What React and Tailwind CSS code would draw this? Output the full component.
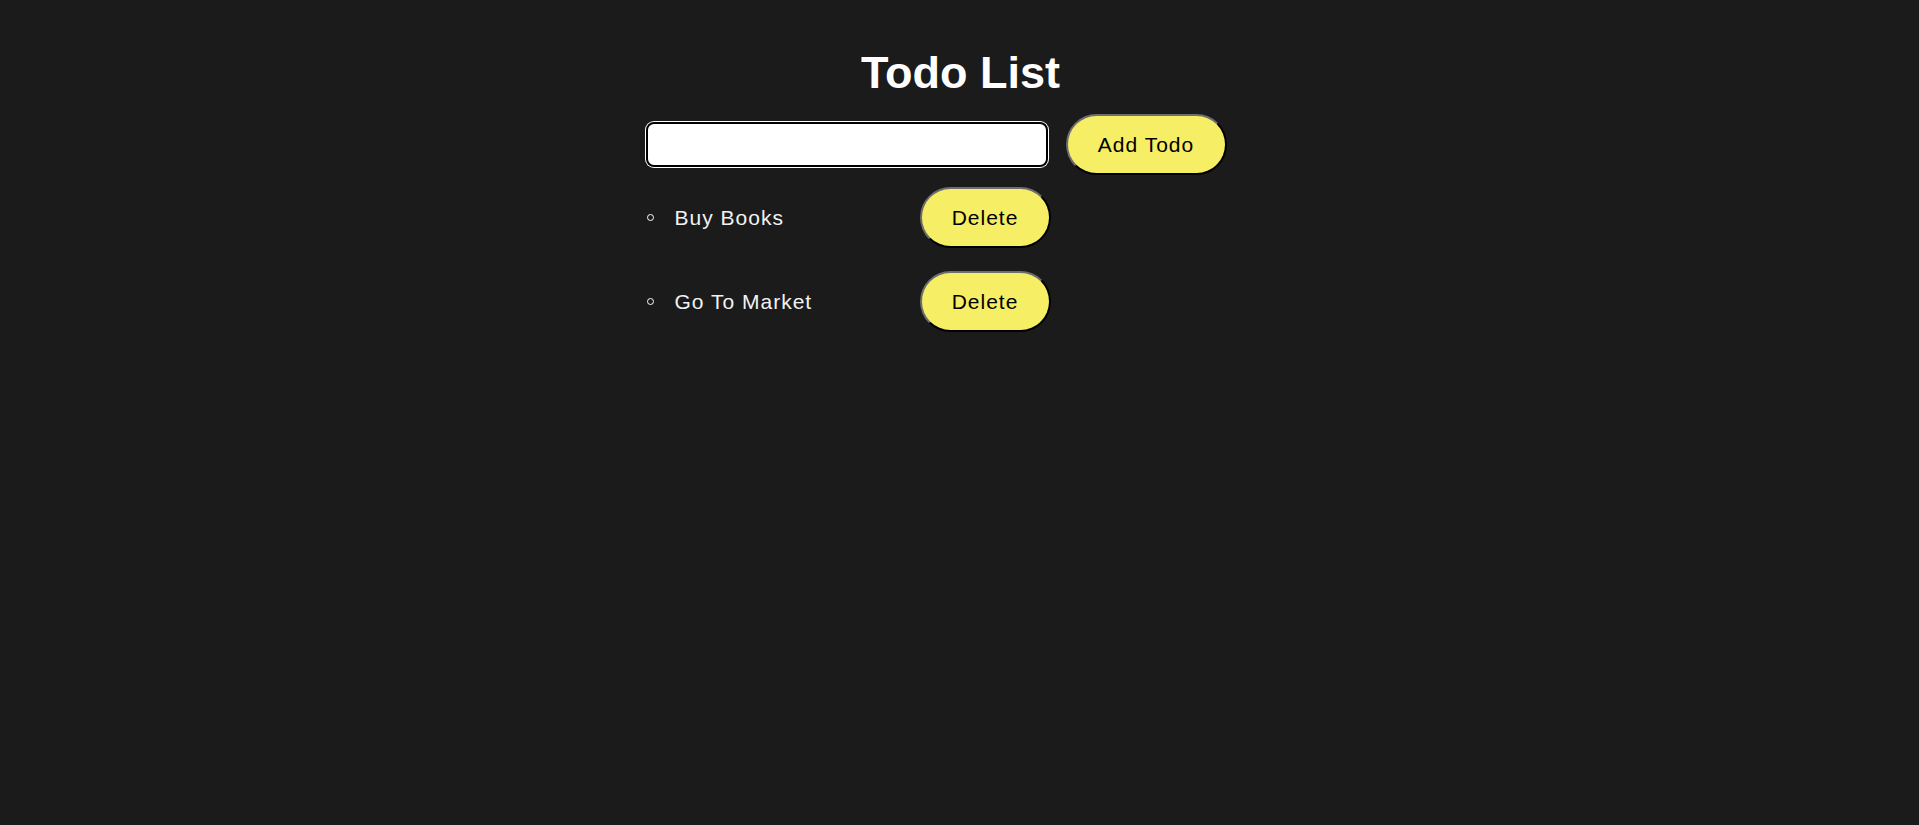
import { useState } from "react";

const initialTodos = ["Buy Books", "Go To Market"];

const pillBtn =
  "h-[61px] rounded-full border-2 border-t-[#6e6e6e] border-l-[#6e6e6e] border-r-black border-b-black bg-[#f6ee64] text-[21px] tracking-[1px] text-black";

export default function App() {
  const [todos, setTodos] = useState(initialTodos);
  const [text, setText] = useState("");

  const addTodo = () => {
    if (!text.trim()) return;
    setTodos([...todos, text.trim()]);
    setText("");
  };

  return (
    <div className="min-h-screen bg-[#1b1b1b] font-['Liberation_Sans',Arial,sans-serif]">
      <div className="mx-auto w-[628px] pt-[48px]">
        <h1 className="pl-[2px] text-center text-[45px] font-bold leading-[50px] text-white">Todo List</h1>

        <div className="mt-[16px] flex items-center gap-[18px]">
          <input
            value={text}
            onChange={(e) => setText(e.target.value)}
            className="h-[45px] w-[402px] rounded-lg border-2 border-black bg-white px-2 text-[18px] text-black outline-none ring-1 ring-white"
          />
          <button onClick={addTodo} className={`${pillBtn} w-[161px]`}>
            Add Todo
          </button>
        </div>

        <ul className="mt-[12px] flex flex-col gap-[23px]">
          {todos.map((todo, i) => (
            <li key={i} className="flex items-center">
              <span className="ml-[1px] size-[7px] rounded-full border border-white" />
              <span className="ml-[21px] w-[245px] text-[21px] tracking-[1px] text-[#f2f2f2]">{todo}</span>
              <button
                onClick={() => setTodos(todos.filter((_, j) => j !== i))}
                className={`${pillBtn} w-[131px]`}
              >
                Delete
              </button>
            </li>
          ))}
        </ul>
      </div>
    </div>
  );
}
